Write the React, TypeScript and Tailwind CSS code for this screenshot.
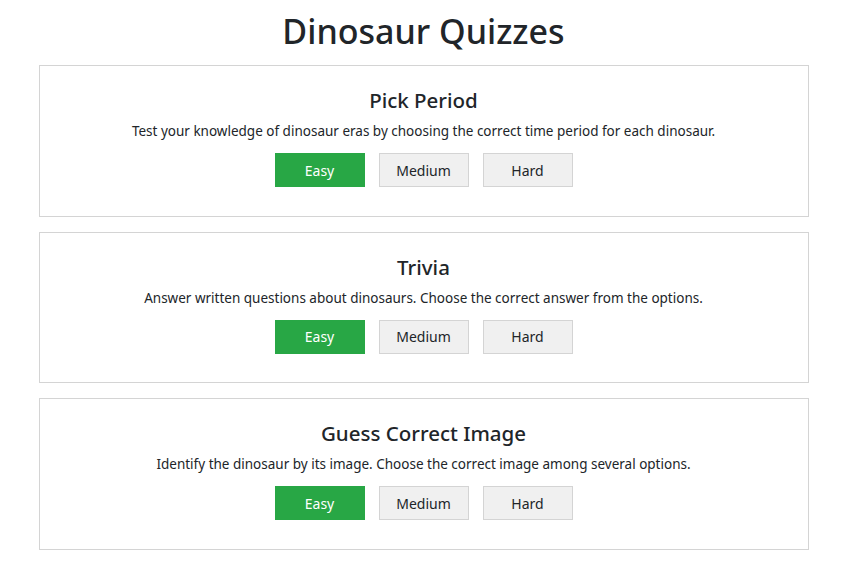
import React from 'react'

const quizzes = [
  {
    title: 'Pick Period',
    description: 'Test your knowledge of dinosaur eras by choosing the correct time period for each dinosaur.',
  },
  {
    title: 'Trivia',
    description: 'Answer written questions about dinosaurs. Choose the correct answer from the options.',
  },
  {
    title: 'Guess Correct Image',
    description: 'Identify the dinosaur by its image. Choose the correct image among several options.',
  },
]

function QuizCard({ title, description }: { title: string; description: string }) {
  return (
    <div className="flex flex-col items-center border border-[#d4d4d4] pt-[20px] h-[151.5px]">
      <h2 className="text-[20.5px] leading-[28px] font-medium text-[#212529]">{title}</h2>
      <p className="mt-[7px] text-[13.5px] leading-[20px] text-[#212529]">{description}</p>
      <div className="mt-[12px] flex gap-[14px]">
        <button className="w-[90px] h-[34px] bg-[#28a745] text-white text-[14px]">Easy</button>
        <button className="w-[90px] h-[34px] bg-[#f0f0f0] border border-[#d4d4d4] text-[#212529] text-[14px]">
          Medium
        </button>
        <button className="w-[90px] h-[34px] bg-[#f0f0f0] border border-[#d4d4d4] text-[#212529] text-[14px]">
          Hard
        </button>
      </div>
    </div>
  )
}

export default function App() {
  return (
    <div className="min-h-screen bg-white font-['Noto_Sans','Open_Sans',sans-serif]">
      <div className="w-[847px] flex flex-col items-center">
        <h1 className="mt-[8px] text-[34px] leading-[46px] font-medium text-[#212529]">Dinosaur Quizzes</h1>
        <div className="mt-[11px] w-[770px] flex flex-col gap-[15px]">
          {quizzes.map((q) => (
            <QuizCard key={q.title} title={q.title} description={q.description} />
          ))}
        </div>
      </div>
    </div>
  )
}
